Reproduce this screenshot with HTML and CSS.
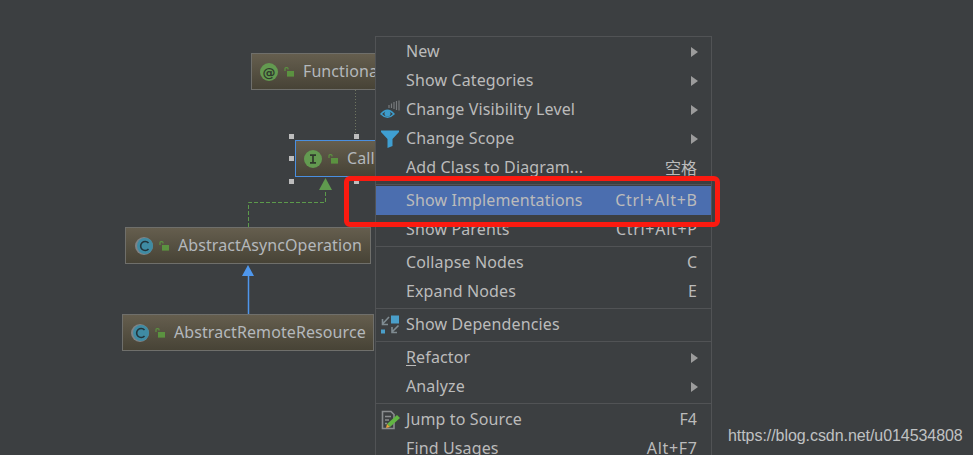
FILE: index.html
```html
<!DOCTYPE html>
<html lang="en">
<head>
<meta charset="utf-8">
<title>Diagram context menu</title>
<link rel="stylesheet" href="styles.css">
</head>
<body>
<svg class="edges" width="973" height="455" viewBox="0 0 973 455" aria-hidden="true">
  <path class="edge-dotted" d="M355.5 90V133"/>
  <path class="edge-dashed" d="M248.5 227V202.5H325.5V190"/>
  <path class="head-green" d="M325.5 178L319 190H332Z"/>
  <path class="edge-blue" d="M248.5 276V314"/>
  <path class="head-blue" d="M248 265L242 276H254Z"/>
</svg>

<div class="node node-functional">
  <svg class="badge" viewBox="0 0 18 18"><circle cx="9" cy="9" r="9" fill="#639a50"/><text x="9" y="13.500" class="badge-text">@</text></svg>
  <svg class="lock" viewBox="0 0 11 10"><path class="lock-shackle" d="M1 4V1.500Q1 .6 2 .6H3Q4 .6 4 1.500V2.500"/><rect x="3" y="4" width="7" height="5.600" fill="#5b9240"/></svg>
  <span class="node-name">FunctionalInterface</span>
</div>

<div class="node node-callable">
  <svg class="badge" viewBox="0 0 18 18"><circle cx="9" cy="9" r="9" fill="#639a50"/><path d="M6 5.200H12M6 12.800H12M9 5.200V12.800" class="badge-i"/></svg>
  <svg class="lock" viewBox="0 0 11 10"><path class="lock-shackle" d="M1 4V1.500Q1 .6 2 .6H3Q4 .6 4 1.500V2.500"/><rect x="3" y="4" width="7" height="5.600" fill="#5b9240"/></svg>
  <span class="node-name">Callable</span>
</div>
<i class="handle h1"></i><i class="handle h2"></i><i class="handle h3"></i><i class="handle h4"></i><i class="handle h5"></i>

<div class="node node-async">
  <svg class="badge" viewBox="0 0 18 18"><circle cx="9" cy="9" r="9" fill="#7f8386"/><circle cx="10" cy="9" r="8" fill="#3f8ba3"/><path d="M13.500 6A4.500 4.500 0 1 0 13.500 12" class="badge-c"/></svg>
  <svg class="lock" viewBox="0 0 11 10"><path class="lock-shackle" d="M1 4V1.500Q1 .6 2 .6H3Q4 .6 4 1.500V2.500"/><rect x="3" y="4" width="7" height="5.600" fill="#5b9240"/></svg>
  <span class="node-name">AbstractAsyncOperation</span>
</div>

<div class="node node-remote">
  <svg class="badge" viewBox="0 0 18 18"><circle cx="9" cy="9" r="9" fill="#7f8386"/><circle cx="10" cy="9" r="8" fill="#3f8ba3"/><path d="M13.500 6A4.500 4.500 0 1 0 13.500 12" class="badge-c"/></svg>
  <svg class="lock" viewBox="0 0 11 10"><path class="lock-shackle" d="M1 4V1.500Q1 .6 2 .6H3Q4 .6 4 1.500V2.500"/><rect x="3" y="4" width="7" height="5.600" fill="#5b9240"/></svg>
  <span class="node-name">AbstractRemoteResource</span>
</div>

<div class="menu">
  <div class="item"><span class="slot"></span><span class="label">New</span><span class="arrow"></span></div>
  <div class="item"><span class="slot"></span><span class="label">Show Categories</span><span class="arrow"></span></div>
  <div class="item"><span class="slot"><svg viewBox="0 0 20 20" width="20" height="20"><path d="M9 5V8M11.500 3.500V8M14 2V9M16.500 1V10M19 .5V10.500" class="bars"/><path d="M1 14Q7.500 6.500 14 14Q7.500 20.500 1 14Z" class="eye"/><circle cx="7.500" cy="13.500" r="3" fill="#3d9ccb"/></svg></span><span class="label">Change Visibility Level</span><span class="arrow"></span></div>
  <div class="item"><span class="slot"><svg viewBox="0 0 20 20" width="20" height="20"><path d="M1 1.500H19V3L12.500 10V17L7.500 19V10L1 3Z" fill="#3f9fd2"/></svg></span><span class="label">Change Scope</span><span class="arrow"></span></div>
  <div class="item"><span class="slot"></span><span class="label">Add Class to Diagram...</span><span class="key">空格</span></div>
  <div class="sep"></div>
  <div class="item active"><span class="slot"></span><span class="label">Show Implementations</span><span class="key key-combo">Ctrl+Alt+B</span></div>
  <div class="item"><span class="slot"></span><span class="label">Show Parents</span><span class="key key-combo">Ctrl+Alt+P</span></div>
  <div class="sep"></div>
  <div class="item"><span class="slot"></span><span class="label">Collapse Nodes</span><span class="key">C</span></div>
  <div class="item"><span class="slot"></span><span class="label">Expand Nodes</span><span class="key">E</span></div>
  <div class="sep"></div>
  <div class="item"><span class="slot"><svg viewBox="0 0 20 20" width="20" height="20"><rect x="11" y=".5" width="8" height="8" fill="#4a9fca"/><rect x="1" y="14.500" width="4" height="4" fill="#4a9fca"/><path d="M9 2L3 8.500M2.500 4V9.500H8M18.500 10.500L12 17M12 12V17.500H17" class="dep"/></svg></span><span class="label">Show Dependencies</span></div>
  <div class="sep"></div>
  <div class="item"><span class="slot"></span><span class="label"><u>R</u>efactor</span><span class="arrow"></span></div>
  <div class="item"><span class="slot"></span><span class="label">Analyze</span><span class="arrow"></span></div>
  <div class="sep"></div>
  <div class="item"><span class="slot"><svg viewBox="0 0 20 20" width="20" height="20"><path d="M2.500 1.500H11L14 4.500V18.500H2.500Z" class="doc"/><path d="M5 6.500H11M5 10H9M5 13.500H7" class="doc"/><path d="M17 5L20 8L10 17L7 14Z" fill="#62b543"/><path d="M7 14L10 17L6 18Z" fill="#e8a33d"/></svg></span><span class="label">Jump to Source</span><span class="key">F4</span></div>
  <div class="item"><span class="slot"></span><span class="label">Find Usages</span><span class="key key-combo">Alt+F7</span></div>
</div>

<div class="callout"></div>
<div class="watermark">https://blog.csdn.net/u014534808</div>
</body>
</html>
```
FILE: styles.css
```css
* { box-sizing: border-box; }
html, body { margin: 0; height: 100%; }
body {
  position: relative;
  width: 973px;
  height: 455px;
  overflow: hidden;
  background: #3c3f41;
  color: #bbbbbb;
  font: 16px "Noto Sans", "Noto Sans CJK SC", sans-serif;
}
.edges { position: absolute; left: 0; top: 0; }
.edges path { fill: none; }
.edges .edge-dotted { stroke: #6f7560; stroke-width: 1; stroke-dasharray: 1 2; }
.edges .edge-dashed { stroke: #5c9a4b; stroke-width: 1; stroke-dasharray: 4 2; }
.edges .head-green { fill: #5f9a4e; }
.edges .edge-blue { stroke: #4f97ec; stroke-width: 1.5; }
.edges .head-blue { fill: #4f97ec; }

.node {
  position: absolute;
  height: 37px;
  display: flex;
  align-items: center;
  border: 1px solid #6f6f6b;
  background: linear-gradient(#655e4e, #474336);
  color: #b4b8bc;
  white-space: nowrap;
  overflow: hidden;
}
.node-functional { left: 251px; top: 53px; width: 160px; padding-left: 8px; }
.node-callable { left: 295px; top: 140px; width: 110px; padding-left: 8px; border-color: #4a8fe0; }
.node-async { left: 125px; top: 227px; width: 246px; padding-left: 9px; }
.node-remote { left: 122px; top: 314px; width: 252px; padding-left: 8px; }
.badge { width: 18px; height: 18px; flex: none; }
.lock { width: 11px; height: 10px; flex: none; margin-left: 6px; }
.lock-shackle { fill: none; stroke: #5b9240; stroke-width: 1.2; }
.node-name { margin: -2px 0 0 8px; letter-spacing: .09px; }
.badge-text { font: bold 13px "DejaVu Sans", sans-serif; fill: #2f3a2c; text-anchor: middle; }
.badge-i { fill: none; stroke: #2f3a2c; stroke-width: 1.7; }
.badge-c { fill: none; stroke: #22343b; stroke-width: 1.6; }

.handle { position: absolute; width: 5px; height: 5px; background: #bdbdbd; }
.h1 { left: 289px; top: 134px; }
.h2 { left: 354px; top: 134px; }
.h3 { left: 289px; top: 156px; }
.h4 { left: 289px; top: 179px; }
.h5 { left: 354px; top: 179px; }

.menu {
  position: absolute;
  left: 375px;
  top: 36px;
  width: 337px;
  border: 1px solid #515355;
  background: #3c3f41;
}
.item {
  height: 29px;
  display: flex;
  align-items: center;
  padding: 0 14px 0 4px;
}
.item.active { background: #4b6eaf; }
.slot { width: 20px; height: 20px; margin-right: 6px; flex: none; }
.slot svg { display: block; }
.label { flex: 1; white-space: nowrap; margin-top: -2px; letter-spacing: .13px; }
.label u { text-underline-offset: 2px; }
.key { white-space: nowrap; margin-top: -2px; }
.key-combo { letter-spacing: .7px; margin-right: -.7px; }
.arrow {
  width: 0;
  height: 0;
  margin-right: -1px;
  border-left: 7px solid #9c9c9c;
  border-top: 5.5px solid transparent;
  border-bottom: 5.5px solid transparent;
}
.sep { height: 4px; display: flex; align-items: center; }
.sep::before { content: ""; flex: 1; height: 1px; background: #515355; }

.bars { fill: none; stroke: #777a7c; stroke-width: 1.2; }
.eye { fill: none; stroke: #3d9ccb; stroke-width: 1.4; }
.dep { fill: none; stroke: #7f8b91; stroke-width: 1.6; }
.doc { fill: none; stroke: #8a8d8f; stroke-width: 1.6; }

.callout {
  position: absolute;
  left: 344px;
  top: 176px;
  width: 376px;
  height: 51px;
  border: 5px solid #fb1a10;
  border-radius: 6px;
}
.watermark {
  position: absolute;
  left: 728px;
  top: 426px;
  font: 16px/20px "Liberation Sans", sans-serif;
  letter-spacing: -.06px;
  color: #c0c2c3;
  white-space: nowrap;
}
```
